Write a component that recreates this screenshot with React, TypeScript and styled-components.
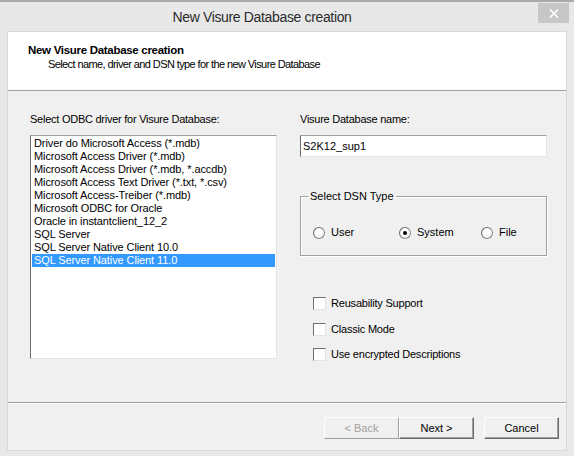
import React, { useState } from "react";
import styled, { createGlobalStyle } from "styled-components";

const GlobalStyle = createGlobalStyle`
  html, body {
    margin: 0;
    padding: 0;
    background: #e8e8e8;
  }
  * {
    box-sizing: border-box;
  }
`;

const Window = styled.div`
  width: 574px;
  height: 456px;
  display: flex;
  flex-direction: column;
  background: #e8e8e8;
  border-top: 2px solid #a9a9a9;
  font-family: "Liberation Sans", Arial, sans-serif;
  font-size: 11px;
  color: #000;
`;

const TitleBar = styled.div`
  height: 29px;
  display: grid;
  grid-template-columns: 1fr auto 1fr;
  align-items: start;
`;

// windows 8 centres the caption a bit left of the middle
const Title = styled.div`
  grid-column: 2;
  padding-top: 7px;
  margin-right: 50px;
  font-size: 14px;
  letter-spacing: -0.35px;
  color: #2b2b2b;
`;

const CloseButton = styled.button`
  grid-column: 3;
  justify-self: end;
  margin: 1px 5px 0 0;
  width: 31px;
  height: 20px;
  border: none;
  padding: 0;
  background: #c7c7c7;
  display: flex;
  align-items: center;
  justify-content: center;
`;

const Client = styled.div`
  flex: 1;
  margin: 0 7px 5px;
  border: 1px solid #d9d9d9;
  background: #f0f0f0;
  display: flex;
  flex-direction: column;
`;

const Header = styled.div`
  height: 59px;
  background: #fff;
  border-bottom: 1px solid #a0a0a0;
  padding: 11px 0 0 20px;
`;

const HeaderTitle = styled.div`
  font-weight: bold;
  font-size: 11.5px;
  letter-spacing: -0.3px;
  line-height: 14px;
`;

const HeaderSub = styled.div`
  padding-left: 20px;
  line-height: 15px;
  letter-spacing: -0.6px;
`;

const Body = styled.div`
  height: 312px;
  display: flex;
  gap: 23px;
  padding: 22px 0 0 22px;
  border-bottom: 1px solid #a0a0a0;
  box-shadow: 0 1px 0 #fff;
`;

const Column = styled.div`
  width: 247px;
  display: flex;
  flex-direction: column;
`;

const Label = styled.div`
  line-height: 13px;
  margin-bottom: 9px;
  letter-spacing: -0.25px;
`;

const ListBox = styled.ul`
  margin: 0;
  padding: 1px 1px 0 1px;
  list-style: none;
  height: 224px;
  background: #fff;
  border: 1px solid;
  border-color: #a0a0a0 #e3e3e3 #e3e3e3 #6d6d6d;
`;

const ListItem = styled.li<{ $selected: boolean }>`
  height: 13px;
  line-height: 13px;
  padding-left: 2px;
  white-space: nowrap;
  letter-spacing: -0.1px;
  background: ${(p) => (p.$selected ? "#3399ff" : "transparent")};
  color: ${(p) => (p.$selected ? "#fff" : "#000")};
  cursor: default;
`;

const TextBox = styled.input`
  height: 22px;
  width: 247px;
  padding: 0 2px;
  font: inherit;
  background: #fff;
  border: 1px solid;
  border-color: #a0a0a0 #e3e3e3 #e3e3e3 #6d6d6d;
  outline: none;
`;

const GroupBox = styled.fieldset`
  margin: 33px 0 0;
  padding: 0 0 0 12px;
  height: 66px;
  border: 1px solid #a0a0a0;
  box-shadow: inset 1px 1px 0 #fff, 1px 1px 0 #fff;
`;

const Legend = styled.legend`
  padding: 0 2px;
  margin-left: -5px;
  line-height: 13px;
`;

const RadioRow = styled.div`
  display: grid;
  grid-template-columns: 86px 82px auto;
  padding-top: 23px;
`;

const RadioLabel = styled.label`
  display: flex;
  align-items: center;
  gap: 6px;
  line-height: 13px;
`;

const RadioCircle = styled.span<{ $checked: boolean }>`
  width: 12px;
  height: 12px;
  border-radius: 50%;
  border: 1px solid #8a8a8a;
  border-top-color: #6e6e6e;
  border-left-color: #6e6e6e;
  background: radial-gradient(circle at 50% 40%, #ffffff 30%, #e4e4e4 100%);
  display: flex;
  align-items: center;
  justify-content: center;

  &::after {
    content: "";
    width: 4px;
    height: 4px;
    border-radius: 50%;
    background: #000;
    display: ${(p) => (p.$checked ? "block" : "none")};
  }
`;

const CheckList = styled.div`
  display: flex;
  flex-direction: column;
  gap: 12.5px;
  margin: 41px 0 0 13px;
`;

const CheckLabel = styled.label`
  display: flex;
  align-items: center;
  gap: 5px;
  line-height: 13px;
  letter-spacing: -0.2px;
`;

const CheckBox = styled.span`
  width: 13px;
  height: 13px;
  background: #fff;
  border: 1px solid;
  border-color: #707070 #e3e3e3 #e3e3e3 #707070;
`;

const Footer = styled.div`
  flex: 1;
  display: flex;
  justify-content: flex-end;
  padding: 14px 7px 0 0;
`;

const Button = styled.button<{ $gap?: number }>`
  width: 75px;
  height: 22px;
  margin-left: ${(p) => p.$gap ?? 0}px;
  padding: 0;
  font: inherit;
  color: #000;
  background: #f0f0f0;
  border: 1px solid;
  border-color: #fff #696969 #696969 #fff;
  box-shadow: inset -1px -1px 0 #a0a0a0;

  &:disabled {
    color: #a0a0a0;
    border-color: #fff #a0a0a0 #a0a0a0 #fff;
    box-shadow: none;
  }
`;

const drivers = [
  "Driver do Microsoft Access (*.mdb)",
  "Microsoft Access Driver (*.mdb)",
  "Microsoft Access Driver (*.mdb, *.accdb)",
  "Microsoft Access Text Driver (*.txt, *.csv)",
  "Microsoft Access-Treiber (*.mdb)",
  "Microsoft ODBC for Oracle",
  "Oracle in instantclient_12_2",
  "SQL Server",
  "SQL Server Native Client 10.0",
  "SQL Server Native Client 11.0",
];

const dsnTypes = ["User", "System", "File"];
const options = ["Reusability Support", "Classic Mode", "Use encrypted Descriptions"];

export default function App() {
  const [selected, setSelected] = useState(9);
  const [dsn, setDsn] = useState("System");
  const [name, setName] = useState("S2K12_sup1");

  return (
    <>
      <GlobalStyle />
      <Window>
        <TitleBar>
          <Title>New Visure Database creation</Title>
          <CloseButton aria-label="Close">
            <svg width="10" height="9" viewBox="0 0 10 9">
              <path d="M1 0.5 L9 8.5 M9 0.5 L1 8.5" stroke="#fff" strokeWidth="1.6" />
            </svg>
          </CloseButton>
        </TitleBar>
        <Client>
          <Header>
            <HeaderTitle>New Visure Database creation</HeaderTitle>
            <HeaderSub>Select name, driver and DSN type for the new Visure Database</HeaderSub>
          </Header>
          <Body>
            <Column>
              <Label>Select ODBC driver for Visure Database:</Label>
              <ListBox>
                {drivers.map((d, i) => (
                  <ListItem key={d} $selected={i === selected} onClick={() => setSelected(i)}>
                    {d}
                  </ListItem>
                ))}
              </ListBox>
            </Column>
            <Column>
              <Label>Visure Database name:</Label>
              <TextBox value={name} onChange={(e) => setName(e.target.value)} />
              <GroupBox>
                <Legend>Select DSN Type</Legend>
                <RadioRow>
                  {dsnTypes.map((t) => (
                    <RadioLabel key={t} onClick={() => setDsn(t)}>
                      <RadioCircle $checked={dsn === t} />
                      {t}
                    </RadioLabel>
                  ))}
                </RadioRow>
              </GroupBox>
              <CheckList>
                {options.map((o) => (
                  <CheckLabel key={o}>
                    <CheckBox />
                    {o}
                  </CheckLabel>
                ))}
              </CheckList>
            </Column>
          </Body>
          <Footer>
            <Button disabled>&lt; Back</Button>
            <Button>Next &gt;</Button>
            <Button $gap={10}>Cancel</Button>
          </Footer>
        </Client>
      </Window>
    </>
  );
}
